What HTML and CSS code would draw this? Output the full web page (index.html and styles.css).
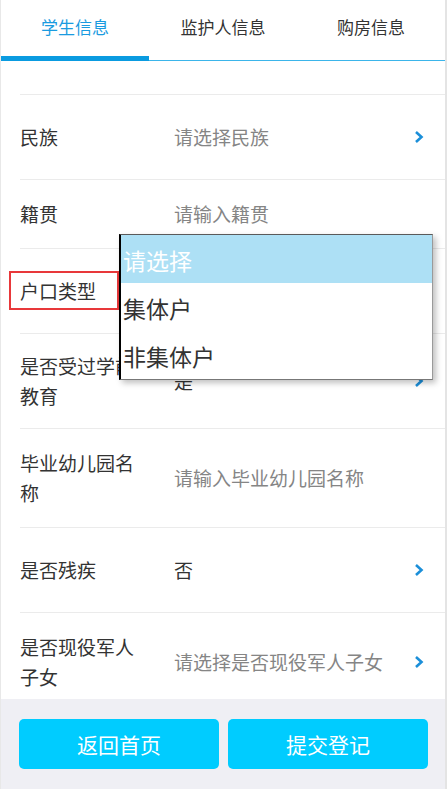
FILE: index.html
```html
<!DOCTYPE html>
<html lang="zh-CN">
<head>
    <meta charset="UTF-8">
    <meta name="viewport" content="width=device-width, initial-scale=1.0">
    <title>学生信息</title>
    <link rel="stylesheet" href="styles.css">
</head>
<body>
    <div class="page">
        <!-- Tabs -->
        <div class="tabs">
            <div class="tab active">学生信息</div>
            <div class="tab">监护人信息</div>
            <div class="tab">购房信息</div>
        </div>

        <!-- Form list -->
        <div class="list">
            <div class="row row-stub"></div>

            <div class="row">
                <div class="label">民族</div>
                <div class="value placeholder">请选择民族</div>
                <svg class="arrow" width="10" height="14" viewBox="0 0 10 14"><polyline points="2,2 7.5,7 2,12" /></svg>
            </div>

            <div class="row row-short">
                <div class="label">籍贯</div>
                <div class="value placeholder">请输入籍贯</div>
            </div>

            <div class="row">
                <div class="label">户口类型</div>
                <div class="value"></div>
                <div class="mark"></div>
            </div>

            <div class="row row-edu">
                <div class="label">是否受过学前教育</div>
                <div class="value">是</div>
                <svg class="arrow" width="10" height="14" viewBox="0 0 10 14"><polyline points="2,2 7.5,7 2,12" /></svg>
            </div>

            <div class="row row-short">
                <div class="label">毕业幼儿园名称</div>
                <div class="value placeholder">请输入毕业幼儿园名称</div>
            </div>

            <div class="row">
                <div class="label">是否残疾</div>
                <div class="value">否</div>
                <svg class="arrow" width="10" height="14" viewBox="0 0 10 14"><polyline points="2,2 7.5,7 2,12" /></svg>
            </div>

            <div class="row row-short">
                <div class="label">是否现役军人子女</div>
                <div class="value placeholder">请选择是否现役军人子女</div>
                <svg class="arrow" width="10" height="14" viewBox="0 0 10 14"><polyline points="2,2 7.5,7 2,12" /></svg>
            </div>
        </div>

        <!-- Bottom buttons -->
        <div class="footer">
            <button class="btn">返回首页</button>
            <button class="btn">提交登记</button>
        </div>

        <!-- Open select popup for 户口类型 -->
        <div class="dropdown">
            <div class="option selected">请选择</div>
            <div class="option">集体户</div>
            <div class="option">非集体户</div>
        </div>
    </div>
</body>
</html>
```

FILE: styles.css
```css
body {
    margin: 0;
    padding: 0;
    background-color: #fff;
    font-family: "Noto Sans CJK SC", "Liberation Sans", sans-serif;
    color: #333;
}

.page {
    position: relative;
    width: 444px;
    height: 789px;
    border-left: 1px solid #e8e8e8;
    border-right: 2px solid #e4e4e4;
    display: flex;
    flex-direction: column;
    overflow: hidden;
}

.tabs {
    display: flex;
    border-bottom: 1px solid #3bb5ea;
    flex-shrink: 0;
}

.tab {
    flex: 1;
    height: 60px;
    line-height: 54px;
    text-align: center;
    font-size: 17px;
    color: #333;
}

.tab.active {
    color: #1a9be0;
    box-shadow: inset 0 -4px 0 #0a9be0, 0 1px 0 #0a9be0;
}

.list {
    flex: 1;
    overflow: hidden;
}

.row {
    position: relative;
    display: flex;
    align-items: center;
    margin-left: 19px;
    padding: 27px 21px 27px 0;
    border-bottom: 1px solid #ebebeb;
    font-size: 19px;
    line-height: 30px;
}

.row-stub {
    height: 33px;
    padding: 0;
}

.row-short {
    padding-top: 19px;
    padding-bottom: 19px;
}

.row-edu {
    padding-top: 17px;
    padding-bottom: 17px;
}

.label {
    width: 120px;
    margin-right: 34px;
    flex-shrink: 0;
}

.value {
    flex: 1;
    color: #333;
}

.value.placeholder {
    color: #858585;
}

.arrow {
    flex-shrink: 0;
}

.arrow polyline {
    fill: none;
    stroke: #1b8fd9;
    stroke-width: 2.6;
}

.mark {
    position: absolute;
    left: -11px;
    top: 22px;
    width: 106px;
    height: 35px;
    border: 2px solid #e8383a;
}

.footer {
    flex-shrink: 0;
    height: 90px;
    background-color: #efeff4;
    display: flex;
    gap: 9px;
    padding: 20px 0 0 18px;
    box-sizing: border-box;
}

.btn {
    width: 200px;
    height: 50px;
    border: none;
    border-radius: 5px;
    background-color: #00ccff;
    color: #fff;
    font-family: inherit;
    font-size: 21px;
}

.dropdown {
    position: absolute;
    left: 118px;
    top: 234px;
    width: 311px;
    background-color: #fff;
    border-top: 1px solid #5a5a5a;
    border-left: 2px solid #000;
    border-right: 1px solid #9a9a9a;
    border-bottom: 1px solid #777;
    box-shadow: 3px 3px 6px rgba(0, 0, 0, 0.25);
}

.option {
    height: 48px;
    line-height: 50px;
    padding-left: 2px;
    font-size: 23px;
    color: #333;
}

.option.selected {
    background-color: #ade0f5;
    color: #fff;
}
```
